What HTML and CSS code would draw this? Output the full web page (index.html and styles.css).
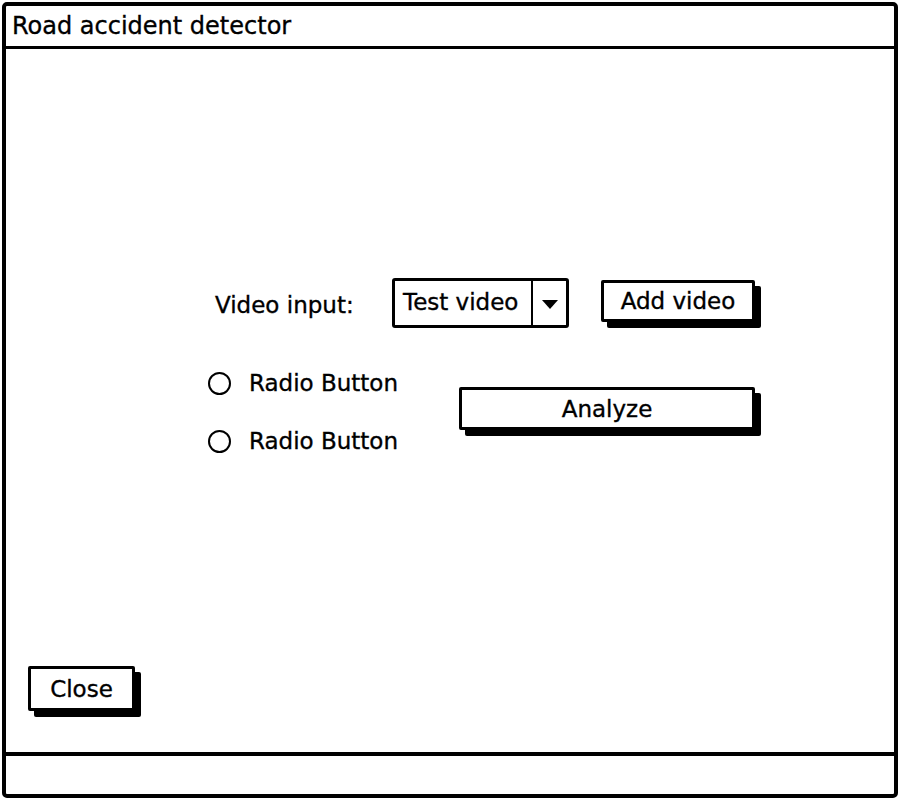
FILE: index.html
```html
<!DOCTYPE html>
<html>
<head>
<meta charset="utf-8">
<link rel="stylesheet" href="styles.css">
</head>
<body>
<div class="window">
  <div class="titlebar">Road accident detector</div>
  <div class="content">
    <div class="form">
      <div class="row1">
        <span class="label">Video input:</span>
        <div class="dropdown">
          <span class="dd-text">Test video</span>
          <span class="dd-arrow"></span>
        </div>
        <button class="btn btn-add">Add video</button>
      </div>
      <div class="row2">
        <div class="radios">
          <div class="radio"><span class="circle"></span><span>Radio Button</span></div>
          <div class="radio"><span class="circle"></span><span>Radio Button</span></div>
        </div>
        <button class="btn btn-analyze">Analyze</button>
      </div>
    </div>
    <div class="footer">
      <button class="btn btn-close">Close</button>
    </div>
  </div>
  <div class="statusbar"></div>
</div>
</body>
</html>
```
FILE: styles.css
```css
* { box-sizing: border-box; }
html, body { margin: 0; padding: 0; background: #fff; }
body {
  font-family: "DejaVu Sans", "Liberation Sans", sans-serif;
  font-size: 23px;
  color: #000;
  -webkit-text-stroke: 0.35px #000;
}
.window {
  margin: 2px;
  width: 896px;
  height: 796px;
  border: 4px solid #000;
  border-radius: 5px;
  display: flex;
  flex-direction: column;
}
.titlebar {
  height: 43px;
  border-bottom: 3px solid #000;
  padding-left: 6px;
  font-size: 24px;
  line-height: 40px;
  white-space: nowrap;
}
.content {
  flex: 1;
  display: flex;
  flex-direction: column;
}
.form {
  margin-top: 229px;
  margin-left: 202px;
}
.row1 {
  display: flex;
  align-items: center;
  height: 50px;
}
.label {
  margin-left: 7px;
  width: 177px;
  padding-top: 4px;
}
.dropdown {
  width: 177px;
  height: 50px;
  border: 3px solid #000;
  border-radius: 3px;
  display: flex;
  align-items: stretch;
}
.dd-text {
  flex: 1;
  padding-left: 8px;
  line-height: 42px;
  white-space: nowrap;
  border-right: 2px solid #000;
}
.dd-arrow {
  width: 33px;
  flex: none;
  display: flex;
  align-items: center;
  justify-content: center;
}
.dd-arrow::after {
  content: "";
  border-left: 8px solid transparent;
  border-right: 8px solid transparent;
  border-top: 9px solid #000;
  margin-top: 2px;
}
.btn {
  font-family: inherit;
  font-size: 23px;
  color: #000;
  -webkit-text-stroke: 0.35px #000;
  background: #fff;
  border: 3px solid #000;
  border-radius: 2px;
  box-shadow: 6px 6px 0 #000;
  padding: 0;
  text-align: center;
}
.btn-add {
  margin-left: 32px;
  width: 154px;
  height: 42px;
  margin-bottom: 4px;
}
.row2 {
  display: flex;
  align-items: flex-start;
  margin-top: 40px;
}
.radios {
  width: 251px;
  display: flex;
  flex-direction: column;
  gap: 28px;
}
.radio {
  display: flex;
  align-items: center;
  height: 30px;
  white-space: nowrap;
}
.circle {
  width: 23px;
  height: 23px;
  border: 2.5px solid #000;
  border-radius: 50%;
  margin-right: 18px;
  flex: none;
}
.btn-analyze {
  margin-top: 19px;
  width: 296px;
  height: 43px;
}
.footer {
  margin-top: auto;
  padding-left: 22px;
  padding-bottom: 41px;
}
.btn-close {
  width: 107px;
  height: 45px;
}
.statusbar {
  height: 42px;
  border-top: 4px solid #000;
}
```
